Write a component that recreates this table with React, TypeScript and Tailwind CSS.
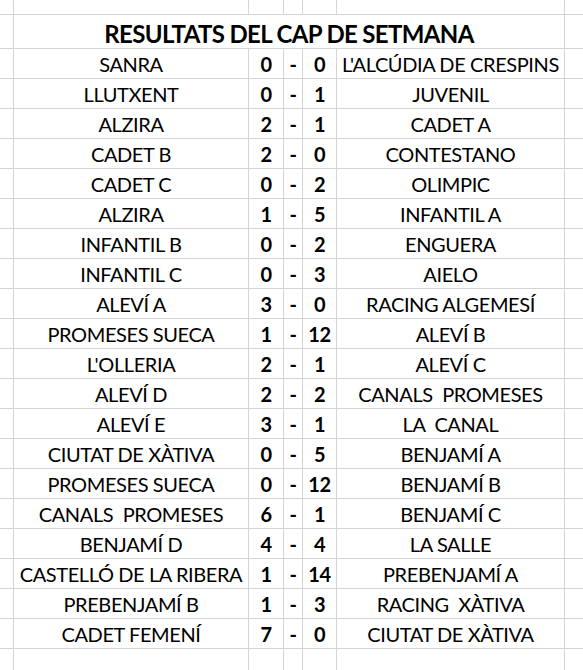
import React from 'react'

const rows: [string, string, string, string][] = [
    ['SANRA', '0', '0', "L'ALCÚDIA DE CRESPINS"],
    ['LLUTXENT', '0', '1', 'JUVENIL'],
    ['ALZIRA', '2', '1', 'CADET A'],
    ['CADET B', '2', '0', 'CONTESTANO'],
    ['CADET C', '0', '2', 'OLIMPIC'],
    ['ALZIRA', '1', '5', 'INFANTIL A'],
    ['INFANTIL B', '0', '2', 'ENGUERA'],
    ['INFANTIL C', '0', '3', 'AIELO'],
    ['ALEVÍ A', '3', '0', 'RACING ALGEMESÍ'],
    ['PROMESES SUECA', '1', '12', 'ALEVÍ B'],
    ["L'OLLERIA", '2', '1', 'ALEVÍ C'],
    ['ALEVÍ D', '2', '2', 'CANALS  PROMESES'],
    ['ALEVÍ E', '3', '1', 'LA  CANAL'],
    ['CIUTAT DE XÀTIVA', '0', '5', 'BENJAMÍ A'],
    ['PROMESES SUECA', '0', '12', 'BENJAMÍ B'],
    ['CANALS  PROMESES', '6', '1', 'BENJAMÍ C'],
    ['BENJAMÍ D', '4', '4', 'LA SALLE'],
    ['CASTELLÓ DE LA RIBERA', '1', '14', 'PREBENJAMÍ A'],
    ['PREBENJAMÍ B', '1', '3', 'RACING  XÀTIVA'],
    ['CADET FEMENÍ', '7', '0', 'CIUTAT DE XÀTIVA'],
]

const cell = 'border-r border-b border-[#d4d4d4] flex items-end justify-center whitespace-pre pb-[2px]'

const App = () => {
    return (
        <div className="w-[583px] h-[670px] overflow-hidden bg-white text-black font-['Lato',sans-serif] text-[20px] leading-[24px] tracking-[-0.4px]">
            <div className="grid grid-cols-[14px_235px_35px_19px_34px_228px_19px] grid-rows-[15px_34px_repeat(20,30px)_30px] w-[584px]">
                {/* top partial row */}
                <div className={cell} />
                <div className={cell} />
                <div className={cell} />
                <div className={cell} />
                <div className={cell} />
                <div className={cell} />
                <div className={cell} />

                {/* title, merged cells */}
                <div className={cell} />
                <div className="col-span-5 border-r border-b border-[#d4d4d4] flex items-end justify-center font-bold text-[24px] leading-[28px] tracking-[-0.65px]">
                    RESULTATS DEL CAP DE SETMANA
                </div>
                <div className={cell} />

                {rows.map(([home, a, b, away], i) => (
                    <React.Fragment key={i}>
                        <div className={cell} />
                        <div className={cell}>{home}</div>
                        <div className={`${cell} font-bold`}>{a}</div>
                        <div className={`${cell} font-bold`}>-</div>
                        <div className={`${cell} font-bold`}>{b}</div>
                        <div className={cell}>{away}</div>
                        <div className={cell} />
                    </React.Fragment>
                ))}

                {/* bottom partial row */}
                <div className={cell} />
                <div className={cell} />
                <div className={cell} />
                <div className={cell} />
                <div className={cell} />
                <div className={cell} />
                <div className={cell} />
            </div>
        </div>
    )
}

export default App
